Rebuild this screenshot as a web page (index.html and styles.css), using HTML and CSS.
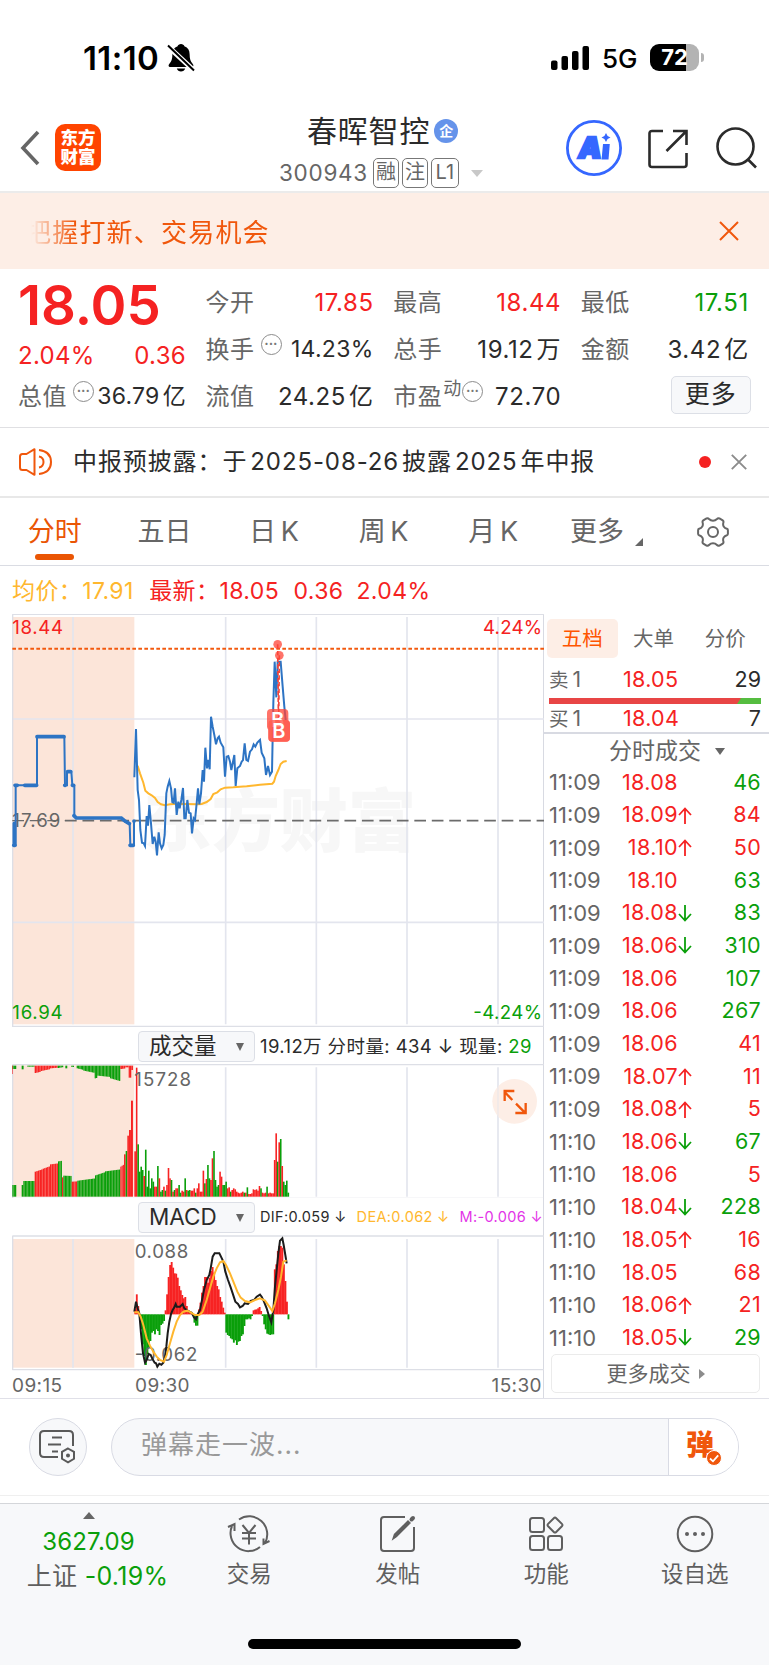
FILE: index.html
```
<!DOCTYPE html>
<html lang="zh-CN">
<head>
<meta charset="UTF-8">
<title>春晖智控 300943</title>
<link rel="stylesheet" href="styles.css">
</head>
<body>

<div class="status">
	<span class="clock">11:10</span>
	<svg class="bell" width="28" height="28" viewBox="0 0 28 28">
		<path d="M14 0c-1.700 0-3 1-3.400 2.200C7 3.500 5.400 6.400 5.400 10c0 5-1 7.500-3 9.700-1.500 1.700-.7 3.300 1 3.300h21.200c1.700 0 2.500-1.600 1-3.300-2-2.200-3-4.700-3-9.700 0-3.600-1.600-6.500-5.200-7.800C17 1 15.700 0 14 0zM9.800 24.500h8.400c-.6 1.900-2.200 3-4.200 3s-3.600-1.100-4.200-3z"/>
		<path d="M0 1.500l27 25" stroke="#fff" stroke-width="5"/>
		<path d="M1 1.500l26 25" stroke="#000" stroke-width="2"/>
	</svg>
	<svg class="signal" width="38" height="24" viewBox="0 0 38 24">
		<rect x="0" y="14.500" width="6.500" height="9.500" rx="2"/>
		<rect x="10.500" y="10" width="6.500" height="14" rx="2"/>
		<rect x="21" y="5" width="6.500" height="19" rx="2"/>
		<rect x="31.500" y="0" width="6.500" height="24" rx="2"/>
	</svg>
	<span class="net">5G</span>
	<div class="battery"><span>72</span></div>
	<i class="battery-tip"></i>
</div>

<div class="header">
	<svg class="back" width="20" height="36" viewBox="0 0 20 36"><path d="M18 2L3 18l15 16" fill="none" stroke="#666" stroke-width="3.600"/></svg>
	<div class="logo">东方<br>财富</div>
	<div class="name">
		<div class="name-top">春晖智控<span class="qi">企</span></div>
		<div class="name-code">300943<span class="tag first">融</span><span class="tag">注</span><span class="tag l1">L1</span><i class="caret"></i></div>
	</div>
	<svg class="ai" width="56" height="56" viewBox="0 0 56 56">
		<circle cx="28" cy="28" r="26.600" fill="none" stroke="#3567ff" stroke-width="2.800"/>
		<text x="0" y="38" class="ai-text" transform="translate(16.500 0) skewX(-8)">A</text>
		<path d="M37 24h6.800l-1.300 15.500h-6.900z" fill="#3567ff"/>
		<path d="M40 13l1.600 2.900 2.900 1.600-2.900 1.600L40 22l-1.600-2.900-2.900-1.600 2.900-1.600z" fill="#3567ff"/>
	</svg>
	<svg class="share" width="40" height="40" viewBox="0 0 40 40" fill="none" stroke="#2b2b2b" stroke-width="2.600">
		<path d="M15 2H4Q1.500 2 1.500 4.500v31Q1.500 38 4 38h32q2.500 0 2.500-2.500V24M25 2h13.500v14M38 2.500L18.500 22"/>
	</svg>
	<svg class="search" width="42" height="42" viewBox="0 0 42 42" fill="none" stroke="#2b2b2b" stroke-width="2.600">
		<circle cx="19.500" cy="19.500" r="18"/><path d="M31.500 32L40 40.500"/>
	</svg>
</div>

<div class="banner">
	<span>把握打新、交易机会</span>
	<svg width="20" height="20" viewBox="0 0 20 20"><path d="M1 1l18 18M19 1L1 19" stroke="#f0570c" stroke-width="2"/></svg>
</div>

<div class="stats">
	<div class="col">
		<div class="price">18.05</div>
		<div class="chg"><span>2.04%</span><span>0.36</span></div>
		<div class="item tight"><label>总值</label><i class="more-dot">•••</i><b>36.79<u>亿</u></b></div>
	</div>
	<div class="col">
		<div class="item"><label>今开</label><b class="red">17.85</b></div>
		<div class="item tight"><label>换手</label><i class="more-dot">•••</i><b>14.23%</b></div>
		<div class="item"><label>流值</label><b>24.25<u>亿</u></b></div>
	</div>
	<div class="col">
		<div class="item"><label>最高</label><b class="red">18.44</b></div>
		<div class="item"><label>总手</label><b>19.12<u>万</u></b></div>
		<div class="item"><label>市盈</label><sup>动</sup><i class="more-dot flush">•••</i><b>72.70</b></div>
	</div>
	<div class="col">
		<div class="item"><label>最低</label><b class="green">17.51</b></div>
		<div class="item"><label>金额</label><b>3.42<u>亿</u></b></div>
		<div class="item"><div class="btn-more">更多</div></div>
	</div>
</div>

<div class="notice">
	<svg width="34" height="28" viewBox="0 0 34 28" fill="none" stroke="#f0570c" stroke-width="2">
		<path d="M15.500 1.200v25.600L7.500 22H3.500Q1 22 1 19.500V8.500Q1 6 3.500 6h4z" stroke-linejoin="round"/>
		<path d="M20 8.500q4.500 1 4.500 5.500t-4.500 5.500M20 2q12 1.500 12 12T20 26"/>
	</svg>
	<span class="notice-text">中报预披露：<span>于<em>2025-08-26</em>披露<em>2025</em>年中报</span></span>
	<i class="dot"></i>
	<svg width="16" height="16" viewBox="0 0 16 16"><path d="M.8.800l14.400 14.400M15.200.800L.8 15.200" stroke="#8c8c8c" stroke-width="1.900"/></svg>
</div>

<div class="tabs">
	<span class="on">分时</span><span>五日</span><span>日 K</span><span>周 K</span><span>月 K</span>
	<span class="tab-more">更多<i></i></span>
	<svg width="32" height="30" viewBox="0 0 32 30" fill="none" stroke="#666" stroke-width="2">
		<path d="M9.500 1.500q1.500-.7 2.500.5 1.700 1.700 4 1.700t4-1.700q1-1.200 2.500-.5l3.200 1.900q1.100.8.700 2.100-.7 2.300.3 4 1.100 1.800 3.200 2.300 1 .3 1 1.500v3.400q0 1.200-1 1.500-2.100.5-3.200 2.300-1 1.700-.3 4 .4 1.300-.7 2.100l-3.200 1.900q-1.500.7-2.500-.5-1.700-1.700-4-1.700t-4 1.700q-1 1.200-2.500.5l-3.200-1.900q-1.100-.8-.7-2.100.7-2.300-.3-4-1.100-1.800-3.200-2.300-1-.3-1-1.500v-3.400q0-1.200 1-1.500 2.100-.5 3.200-2.300 1-1.700.3-4-.4-1.300.7-2.100z"/>
		<circle cx="16" cy="15" r="5"/>
	</svg>
</div>

<div class="legend">
	<span class="yellow">均价：</span><span class="yellow v1">17.91</span>
	<span class="red">最新：</span><span class="red v2">18.05</span><span class="red v3">0.36</span><span class="red">2.04%</span>
</div>

<div class="main">
	<div class="charts">
		<!-- price -->
		<svg class="pane" width="544" height="413" viewBox="0 162 1632 1239">
			<rect x="37" y="171" width="366" height="1222" fill="#fce5d9"/>
			<text class="mark" x="430" y="857" textLength="818">东方财富</text>
			<path class="grid" d="M219 171V1393M677 171V1393M949 171V1393M1221 171V1393M1494 171V1393M37 477H1632M37 1087H1632"/>
			<path class="frame" d="M37 163H1632M38 163V1401M37 1399H1632"/>
			<path d="M37 266H1632" stroke="#f2590e" stroke-width="6" stroke-dasharray="11 7"/>
			<path d="M195 782H1632" stroke="#6b6b6b" stroke-width="5" stroke-dasharray="35 17.400"/>
			<path d="M37 782H195" stroke="#6b6b6b" stroke-width="4" stroke-dasharray="35 17.400"/>
			<text class="lbl gray" x="37" y="801" textLength="144">17.69</text>
			<polyline class="yl" points="413,617 420,640 430,668 436,692 445,700 455,706 465,714 473,726 483,733 495,736 510,733 530,731 560,732 590,733 605,732 620,726 632,717 640,702 652,697 662,688 675,683 700,682 740,679 780,674 817,671 822,665 827,648 835,630 842,612 850,605 860,603"/>
			<polyline class="bl" points="43,856 47,856 47,676 111,676 111,530 193,530 195,676 201,676 201,635 214,635 217,676 223,678 223,767 230,774 365,774 375,785 389,791 391,856 402,856 402,782"/>
			<path class="bl thick" d="M41 856h4M45 676h7M74 676H110M111 530H192M194 676h2M203 635H212M217 676h4M222 767l7 7H364l12 10 12 7M390 856h10M402 783v1M43 790V856"/>
			<polyline class="bl" points="403,652 408,507 413,690 417,720 421,810 426,848 431,850 435,858 440,768 444,797 448,735 453,790 458,852 463,830 467,845 471,886 476,817 480,850 485,865 490,855 494,825 499,700 503,680 508,663 513,685 517,726 521,728 525,685 530,765 535,725 539,745 544,720 549,684 553,775 557,775 562,720 567,758 572,760 576,820 581,775 585,780 590,730 594,685 598,733 603,700 608,630 612,665 616,563 621,625 625,600 629,628 633,470 638,500 643,525 648,553 653,535 657,530 662,548 670,562 675,650 680,590 685,588 690,605 694,630 703,585 707,678 712,625 720,618 725,605 729,600 734,550 739,600 744,603 750,575 756,568 761,553 766,560 772,548 780,540 785,578 793,595 798,645 804,618 810,645 816,635 820,430 824,305 829,412 833,305 842,305 848,380 853,440 857,480"/>
			<path d="M833 253L835 450M838 286L836 480" stroke="#f4433a" stroke-width="5" stroke-dasharray="13 7"/>
			<g fill="#ff4538" opacity=".75">
				<circle cx="833" cy="253" r="13"/><circle cx="838" cy="286" r="13"/>
				<rect x="801" y="447" width="64" height="64" rx="12"/><rect x="805" y="480" width="65" height="65" rx="12"/>
			</g>
			<text class="b" x="813" y="501">B</text>
			<rect x="805" y="480" width="65" height="65" rx="12" fill="#ff5a4d" opacity=".8"/>
			<text class="b" x="817" y="534">B</text>
			<text class="lbl red" x="37" y="221" textLength="152">18.44</text>
			<text class="lbl red" x="1449" y="221" textLength="177">4.24%</text>
			<text class="lbl green" x="37" y="1378" textLength="151">16.94</text>
			<text class="lbl green" x="1420" y="1378" textLength="206">-4.24%</text>
		</svg>

		<div class="bar">
			<div class="select">成交量<i></i></div>
			<div class="bar-text">19.12<u>万</u> <u>分时量</u>: 434 ↓ <u>现量</u>: <span class="green">29</span></div>
		</div>

		<!-- volume -->
		<svg class="pane" width="544" height="134" viewBox="0 222 1632 402">
			<rect x="37" y="226" width="366" height="394" fill="#fce5d9"/>
			<path class="grid" d="M219 232V620M677 232V620M949 232V620M1221 232V620M1494 232V620"/>
			<path class="frame" d="M37 224H1632M38 224V624M37 625H1632"/>
			<g id="vol"></g>
			<text class="lbl gray" x="403" y="289" textLength="170">15728</text>
			<circle cx="1544" cy="334" r="67" fill="#fdeee6"/>
			<path class="grid" d="M1494 289V379" opacity=".5"/>
			<path d="M1537 330L1514 306M1514 333V303h29M1548 341l26 26M1577 339v30h-31" fill="none" stroke="#f0570c" stroke-width="7"/>
		</svg>

		<div class="bar macd-bar">
			<div class="select">MACD<i></i></div>
			<div class="bar-text small"><span>DIF:0.059 ↓</span><span class="yellow">DEA:0.062 ↓</span><span class="purple">M:-0.006 ↓</span></div>
		</div>

		<!-- macd -->
		<svg class="pane" width="544" height="136" viewBox="0 105 1632 408">
			<rect x="37" y="117" width="366" height="386" fill="#fce5d9"/>
			<path class="grid" d="M219 117V503M677 117V503M949 117V503M1221 117V503M1494 117V503"/>
			<path class="frame" d="M37 108H1632M38 108V510M37 509H1632"/>
			<g id="macd"></g>
			<text class="lbl gray" x="404" y="173" textLength="161">0.088</text>
			<text class="lbl gray" x="404" y="484" textLength="188">-0.062</text>
			<polyline class="dif" points="403,335 408,305 413,325 418,340 423,400 429,460 435,488 440,480 446,462 452,465 458,478 464,488 468,490 472,500 478,491 484,494 490,488 495,470 499,440 503,400 508,365 513,342 518,330 523,322 527,312 530,320 540,320 548,312 553,325 560,330 568,335 575,338 582,352 588,358 592,345 600,330 606,300 612,270 620,240 628,225 632,205 638,170 644,160 658,160 664,172 670,185 676,215 684,240 692,262 698,280 706,305 714,312 720,322 728,318 734,310 744,312 752,303 762,300 770,290 780,284 785,290 792,305 800,325 806,345 814,367 820,330 825,260 830,210 835,160 840,122 847,115 851,135 856,165 860,190"/>
			<polyline class="yl" points="403,337 415,337 422,350 430,375 440,415 450,437 460,455 470,470 480,480 492,485 500,465 510,430 520,395 530,365 540,345 550,335 562,332 572,337 585,345 598,345 608,335 620,300 630,265 640,230 650,205 660,187 670,183 678,195 690,220 700,245 712,275 722,293 735,303 750,307 765,300 780,295 795,302 808,320 817,333 825,310 835,270 843,230 850,185 860,181"/>
		</svg>

		<div class="times"><span>09:15</span><span>09:30</span><span>15:30</span></div>
	</div>

	<div class="side">
		<div class="side-tabs"><span class="on">五档</span><span>大单</span><span>分价</span></div>
		<div class="quote"><span>卖<em>1</em></span><b>18.05</b><span class="n">29</span></div>
		<div class="ratio"><i></i></div>
		<div class="quote buy"><span>买<em>1</em></span><b>18.04</b><span class="n">7</span></div>
		<div class="side-title">分时成交<i></i></div>
		<div id="ticks"></div>
		<div class="side-more">更多成交<i></i></div>
	</div>
</div>

<div class="danmu">
	<div class="danmu-set">
		<svg width="38" height="34" viewBox="0 0 38 34" fill="none" stroke="#5a5a5a" stroke-width="2">
			<path d="M34 16V5q0-4-4-4H5Q1 1 1 5v18q0 4 4 4h14M13 7.500h10M9 14.500h13M13 21.500h6"/>
			<path d="M29 18.500l6 3.400v6.900l-6 3.500-6-3.500v-6.900z"/><circle cx="29" cy="25.400" r="1" fill="#5a5a5a"/>
		</svg>
	</div>
	<div class="danmu-box">
		<span>弹幕走一波...</span>
		<div class="danmu-btn">弹
			<svg width="16" height="16" viewBox="0 0 16 16"><circle cx="8" cy="8" r="7.500" fill="#f0570c" stroke="#fff"/><path d="M4 8.500l3 2.800 5.200-6" fill="none" stroke="#fff" stroke-width="1.800"/></svg>
		</div>
	</div>
</div>

<div class="nav">
	<div class="index">
		<i></i>
		<div class="green">3627.09</div>
		<div><u>上证</u> <span class="green">-0.19%</span></div>
	</div>
	<div class="nav-item">
		<svg width="44" height="40" viewBox="0 0 44 40" fill="none" stroke="#5f5f5f" stroke-width="2">
			<path d="M12 5.500A18 18 0 0 1 38 29M36.500 24.500V30l6-3M33 33A18 18 0 0 1 5 12M7.500 17V10L1 13"/>
			<path d="M15.500 11l6.500 8 6.500-8M22 19v11.500M15 19h14M15 24.500h14"/>
		</svg>
		交易
	</div>
	<div class="nav-item">
		<svg width="38" height="40" viewBox="0 0 38 40" fill="none" stroke="#5f5f5f" stroke-width="2">
			<path d="M26 3H5Q2 3 2 6v28q0 3 3 3h27q3 0 3-3V13"/>
			<path d="M14 25l1.500-4.500L29 7l2 2-13.500 13.500z" fill="#5f5f5f" stroke-width="1.400"/><path d="M32.500 5.500l1.500-1.500" stroke-width="4" stroke-linecap="round"/>
		</svg>
		发帖
	</div>
	<div class="nav-item">
		<svg width="36" height="40" viewBox="0 0 36 40" fill="none" stroke="#5f5f5f" stroke-width="2">
			<rect x="2" y="4" width="14" height="14" rx="2.500"/><rect x="2" y="22" width="14" height="14" rx="2.500"/><rect x="20" y="22" width="14" height="14" rx="2.500"/>
			<path d="M25.800 4.200q1.200-1.200 2.400 0l5.700 5.700q1.200 1.200 0 2.400l-5.700 5.700q-1.200 1.200-2.400 0l-5.700-5.700q-1.200-1.200 0-2.400z"/>
		</svg>
		功能
	</div>
	<div class="nav-item">
		<svg width="38" height="40" viewBox="0 0 38 40">
			<circle cx="19" cy="20" r="17.300" fill="none" stroke="#5f5f5f" stroke-width="2"/>
			<g fill="#5f5f5f"><circle cx="11" cy="20" r="2"/><circle cx="19" cy="20" r="2"/><circle cx="27" cy="20" r="2"/></g>
		</svg>
		设自选
	</div>
</div>
<div class="home"></div>

<script src="chart.js"></script>
</body>
</html>
```
FILE: styles.css
```
* {
	box-sizing: border-box;
}

body {
	margin: 0;
	width: 769px;
	height: 1665px;
	overflow: hidden;
	background: #fff;
	color: #2b2b2b;
	font-family: Inter, "Noto Sans CJK SC", sans-serif;
	font-size: 24px;
	line-height: 1;
	white-space: nowrap;
}

i, em { font-style: normal; }
b { font-weight: normal; }
u { text-decoration: none; }
svg { flex: none; display: block; }

.red { color: #f52222; fill: #f52222; }
.green { color: #0a9f0a; fill: #0a9f0a; }
.yellow { color: #ffb72e; }
.purple { color: #e335e8; }
.gray { fill: #666; }

/* status bar */
.status {
	display: flex;
	align-items: center;
	height: 107px;
	padding: 8px 0 0 83px;
	color: #000;
}
.clock {
	width: 84px;
	padding-top: 1px;
	font-size: 33px;
	font-weight: 600;
	letter-spacing: .4px;
}
.signal { margin-left: 356px; }
.net {
	width: 48px;
	margin-left: 13px;
	padding-top: 2px;
	font-size: 26px;
	font-weight: 500;
}
.battery {
	width: 49px;
	height: 27px;
	border-radius: 9px;
	background: linear-gradient(90deg, #000 36px, #b3b3b3 36px);
	color: #fff;
	font-size: 22px;
	font-weight: 700;
	line-height: 27px;
	text-align: center;
}
.battery-tip {
	width: 3px;
	height: 9px;
	margin-left: 2px;
	border-radius: 0 3px 3px 0;
	background: #b3b3b3;
}

/* header */
.header {
	display: flex;
	align-items: center;
	height: 86px;
	padding-left: 20px;
	border-bottom: 2px solid #ebebeb;
}
.back { margin-top: -3px; }
.logo {
	width: 46px;
	height: 47px;
	margin: -3px 0 0 15px;
	padding-top: 4px;
	border-radius: 10px;
	background: #ff4400;
	color: #fff;
	font-size: 17.500px;
	font-weight: 900;
	line-height: 19px;
	text-align: center;
}
.name {
	width: 208px;
	margin-left: 178px;
}
.name-top {
	display: flex;
	align-items: center;
	height: 44px;
	padding-left: 28px;
	font-size: 30px;
	letter-spacing: .8px;
}
.qi {
	width: 24px;
	height: 24px;
	margin-left: 4px;
	border-radius: 50%;
	background: #6593ea;
	color: #fff;
	font-size: 14px;
	font-weight: 700;
	letter-spacing: 0;
	line-height: 23px;
	text-align: center;
}
.name-code {
	display: flex;
	align-items: center;
	height: 36px;
	padding-top: 4px;
	color: #666;
	font-size: 22.500px;
	letter-spacing: .7px;
}
.tag {
	width: 26px;
	height: 30px;
	margin-left: 3px;
	border: 1px solid #777;
	border-radius: 5px;
	font-size: 20px;
	letter-spacing: 0;
	line-height: 27px;
	text-align: center;
}
.tag.first { margin-left: 5px; }
.l1 { width: 28px; }
.caret {
	margin-left: 12px;
	border: 6.500px solid transparent;
	border-top: 7px solid #c8c8c8;
	border-bottom: 0;
}
.ai { margin: -2px 0 0 79px; }
.ai-text {
	fill: #3567ff;
	stroke: #3567ff;
	stroke-width: 2.500px;
	font-size: 29px;
	font-weight: 900;
}
.share { margin: -1px 0 0 26px; }
.search { margin: -2px 0 0 28px; }

/* banner */
.banner {
	display: flex;
	align-items: center;
	justify-content: space-between;
	height: 76px;
	padding: 0 30px 0 25px;
	background: #fdeee6;
	color: #f0570c;
	font-size: 26px;
	letter-spacing: 1.200px;
}
.banner span {
	margin-top: 3px;
	-webkit-mask-image: linear-gradient(90deg, transparent 6px, #000 50px);
	mask-image: linear-gradient(90deg, transparent 6px, #000 50px);
}

/* quote numbers */
.stats {
	display: grid;
	grid-template-columns: repeat(4, 168px);
	column-gap: 19.600px;
	height: 159px;
	padding: 10px 19px 0 18px;
	border-bottom: 1px solid #e0e0e3;
}
.item {
	display: flex;
	align-items: center;
	height: 47px;
}
.item label {
	color: #666;
	letter-spacing: .5px;
}
.item b {
	margin-left: auto;
	letter-spacing: .6px;
}
.item u { margin-left: 3px; }
.item.tight b { font-size: 23px; letter-spacing: .3px; }
.item sup {
	margin: -16px 0 0 1px;
	color: #666;
	font-size: 18px;
}
.more-dot {
	width: 21px;
	height: 21px;
	margin: -10px 0 0 6px;
	border: 1.500px solid #8c8c8c;
	border-radius: 50%;
	color: #777;
	font-size: 7px;
	letter-spacing: .4px;
	line-height: 18px;
	text-align: center;
}
.more-dot.flush { margin-left: 1px; }
.price {
	height: 50px;
	color: #f52222;
	font-size: 54.500px;
	font-weight: 600;
	line-height: 52px;
}
.chg {
	display: flex;
	justify-content: space-between;
	align-items: center;
	height: 44px;
	padding-top: 9px;
	color: #f52222;
	letter-spacing: .3px;
}
.btn-more {
	width: 80px;
	height: 38px;
	margin: -4px -2px 0 auto;
	border: 1.500px solid #dcdfe6;
	border-radius: 5px;
	background: #f7f8fa;
	font-size: 25px;
	letter-spacing: 1px;
	line-height: 34px;
	text-align: center;
}

.notice {
	display: flex;
	align-items: center;
	height: 70px;
	padding: 0 22px 0 19px;
	border-bottom: 2px solid #e8e8e8;
	letter-spacing: .9px;
}
.notice-text { margin-left: 20px; }
.notice-text em { margin: 0 3px; }
.dot {
	width: 12px;
	height: 12px;
	margin: 0 20px 0 auto;
	border-radius: 50%;
	background: #f52222;
}

.tabs {
	display: flex;
	align-items: center;
	height: 68px;
	padding: 0 40px 0 0;
	border-bottom: 1px solid #dadce3;
	color: #666;
	font-size: 27px;
	word-spacing: -3px;
}
.tabs span {
	position: relative;
	width: 109.600px;
	text-align: center;
}
.tabs .on { color: #ea5504; }
.tabs .on::after {
	content: "";
	position: absolute;
	left: 35px;
	top: 36px;
	width: 39px;
	height: 6px;
	border-radius: 3px;
	background: #ea5504;
}
.tabs .tab-more { width: 98px; }
.tab-more i {
	position: absolute;
	right: 3px;
	bottom: -1px;
	border-left: 8px solid transparent;
	border-bottom: 8px solid #666;
}
.tabs svg { margin-left: auto; }

.legend {
	display: flex;
	align-items: center;
	height: 50px;
	margin-bottom: -2px;
	padding-left: 12px;
	font-size: 23px;
	letter-spacing: .4px;
}
.v1 { width: 67px; }
.v2 { width: 74px; }
.v3 { width: 63px; }

/* charts */
.main {
	display: flex;
	height: 785px;
	border-bottom: 1px solid #e0e0e8;
}
.charts {
	width: 544px;
	border-right: 1px solid #d8dae2;
}
.grid { stroke: #e3e5ee; stroke-width: 5; fill: none; }
.frame { stroke: #dddfe6; stroke-width: 4; fill: none; }
.mark { font-size: 205px; font-weight: 900; fill: #f7f7f7; }
.lbl { font-size: 56px; }
.yl { fill: none; stroke: #ffb72e; stroke-width: 6; }
.bl { fill: none; stroke: #2d74c4; stroke-width: 6; }
.dif { fill: none; stroke: #1c1c1c; stroke-width: 6; }
.thick { stroke-width: 11; stroke-linecap: round; }
.b { font-size: 60px; font-weight: 600; fill: #fff; }

.bar {
	display: flex;
	align-items: center;
	height: 37px;
	padding: 2px 0 0 138px;
}
.select {
	display: flex;
	align-items: center;
	justify-content: space-between;
	width: 117px;
	height: 31px;
	padding: 0 10px;
	border: 1.500px solid #dcdfe6;
	border-radius: 4px;
	background: #f7f8fa;
	font-size: 22.500px;
}
.select i {
	border: 4.500px solid transparent;
	border-top: 8px solid #666;
	border-bottom: 0;
}
.bar-text {
	margin-left: 5px;
	font-size: 18.500px;
	letter-spacing: .4px;
}
.bar-text.small {
	display: flex;
	justify-content: space-between;
	width: 283px;
	font-size: 14.500px;
	letter-spacing: .35px;
}
.times {
	display: grid;
	grid-template-columns: 123px 1fr auto;
	padding: 5px 1px 0 12px;
	color: #666;
	font-size: 19px;
	letter-spacing: .4px;
}

/* right column */
.side {
	width: 225px;
	padding: 5px 8px 0 5px;
	font-size: 21.500px;
}
.side-tabs {
	display: flex;
	height: 39px;
	margin-left: -2px;
	color: #666;
	line-height: 39px;
	text-align: center;
}
.side-tabs span { width: 73px; font-size: 20.500px; }
.side-tabs .on {
	width: 72px;
	border-radius: 5px;
	background: #fdeee6;
	color: #ff5500;
}
.quote {
	display: grid;
	grid-template-columns: 74px 60px 1fr;
	align-items: center;
	height: 40px;
	padding-top: 3px;
}
.quote span:first-child { color: #666; font-size: 19.500px; }
.quote em { margin-left: 4px; font-size: 21px; }
.quote b { color: #f52222; letter-spacing: .3px; }
.quote .n { text-align: right; }
.quote.buy {
	height: 30px;
	margin: 0 -8px 0 -5px;
	padding: 2px 8px 0 5px;
	border-bottom: 2px solid #d8dae2;
}
.ratio {
	height: 6px;
	background: #55bd40;
}
.ratio i {
	display: block;
	width: 192px;
	height: 6px;
	background: #e84545;
	clip-path: polygon(0 0, 100% 0, 188px 100%, 0 100%);
}
.side-title {
	display: flex;
	align-items: center;
	height: 32px;
	padding: 2px 0 0 60px;
	color: #666;
	font-size: 23px;
}
.side-title i {
	margin-left: 14px;
	border: 5.500px solid transparent;
	border-top: 7px solid #666;
	border-bottom: 0;
}
.tick {
	display: grid;
	grid-template-columns: 58px 71px 15px 1fr;
	align-items: center;
	height: 32.680px;
}
.tick span:first-child { color: #666; font-size: 22px; }
.tick span:nth-child(2) { text-align: right; letter-spacing: .4px; }
.tick span:last-child { text-align: right; letter-spacing: .3px; }
.side-more {
	display: flex;
	align-items: center;
	justify-content: center;
	height: 39px;
	margin: 0 1px 0 2px;
	border: 1.500px solid #ebebeb;
	border-radius: 5px;
	color: #666;
	font-size: 21px;
}
.side-more i {
	margin-left: 8px;
	border: 5px solid transparent;
	border-left: 6px solid #8c8c8c;
	border-right: 0;
}

/* bullet comments */
.danmu {
	display: flex;
	align-items: center;
	height: 97px;
	padding: 0 30px 0 29px;
	border-bottom: 1px solid #efefef;
}
.danmu-set {
	display: flex;
	align-items: center;
	justify-content: center;
	width: 58px;
	height: 58px;
	border: 1px solid #d9dbe4;
	border-radius: 50%;
	background: #f7f8fa;
}
.danmu-box {
	display: flex;
	width: 628px;
	height: 58px;
	margin-left: 24px;
	border: 1px solid #d9dbe4;
	border-radius: 29px;
	background: #f7f8fa;
	color: #999;
	font-size: 26px;
	line-height: 52px;
	letter-spacing: 1px;
	overflow: hidden;
}
.danmu-box span {
	flex: 1;
	padding-left: 29px;
}
.danmu-btn {
	position: relative;
	width: 70px;
	padding-left: 17px;
	border-left: 1px solid #d9dbe4;
	background: #fff;
	color: #f0570c;
	font-size: 28px;
	font-weight: 900;
}
.danmu-btn svg {
	position: absolute;
	left: 37px;
	top: 31px;
}

/* bottom nav */
.nav {
	display: flex;
	height: 162px;
	margin-top: 7px;
	padding-left: 2px;
	border-top: 1px solid #d4d6da;
	background: #f7f8fa;
	color: #5f5f5f;
}
.index {
	display: flex;
	flex-direction: column;
	align-items: center;
	width: 173px;
	padding-top: 8px;
	line-height: 34px;
	letter-spacing: .2px;
}
.index i {
	margin-bottom: 6px;
	border: 6.500px solid transparent;
	border-top: 0;
	border-bottom: 7px solid #666;
}
.index div:last-child {
	padding-left: 18px;
	font-size: 25px;
	letter-spacing: .3px;
}
.nav-item {
	display: flex;
	flex-direction: column;
	align-items: center;
	width: 148.500px;
	padding-top: 10px;
	font-size: 22.500px;
	gap: 9px;
}
.home {
	position: absolute;
	left: 248px;
	top: 1639px;
	width: 273px;
	height: 10px;
	border-radius: 5px;
	background: #000;
}
```
FILE: chart.js
```
var RED = "#f72323", GREEN = "#0a9f0a";

function bar(id, x, w, y, h, color) {
	var r = document.createElementNS("http://www.w3.org/2000/svg", "rect");
	r.setAttribute("x", x);
	r.setAttribute("y", y);
	r.setAttribute("width", w);
	r.setAttribute("height", h);
	r.setAttribute("fill", color);
	document.getElementById(id).appendChild(r);
}

// call auction: from, to, height at start, height at end, color
var auction = [
	[37,49,35,35,"g"], [65,70,35,36,"g"], [70,104,47,47,"g"], [104,128,75,83,"r"], [128,150,84,92,"r"],
	[150,174,97,100,"r"], [174,186,106,108,"g"], [186,190,58,58,"r"], [190,215,63,62,"g"], [215,232,45,46,"r"],
	[232,285,48,55,"g"], [285,315,64,74,"g"], [315,361,76,82,"g"], [361,372,90,98,"r"], [372,377,127,127,"r"],
	[377,382,137,137,"g"], [382,387,183,183,"r"], [387,393,200,200,"r"], [393,399,288,288,"r"]
];
var unmatched = [
	[37,49,10,10,"g"], [37,39,25,25,"r"], [65,71,11,11,"g"], [82,104,3,3,"g"], [104,122,22,18,"r"], [122,150,16,10,"r"],
	[150,173,8,6,"r"], [173,190,7,4,"g"], [196,202,8,8,"g"], [214,222,4,4,"g"], [230,250,8,13,"g"], [250,284,15,22,"g"],
	[284,292,38,36,"g"], [292,330,30,34,"g"], [330,361,38,47,"g"], [361,376,10,8,"r"], [376,386,5,5,"r"], [386,394,36,36,"r"], [394,399,13,13,"r"]
];
function auctionBars(list, fromTop) {
	list.forEach(function (a) {
		var n = Math.max(1, Math.round((a[1] - a[0]) / 4.4)), w = (a[1] - a[0]) / n;
		for (var i = 0; i < n; i++) {
			var h = a[2] + (a[3] - a[2]) * i / n;
			bar("vol", a[0] + i * w, w - .2, fromTop ? 227 : 620 - h, h, a[4] == "r" ? RED : GREEN);
		}
	});
}
auctionBars(auction, false);
auctionBars(unmatched, true);

var vol = ("r136 r387 g157 g75 g90 g80 r62 g141 g30 g78 g25 g55 g45 r30 r30 g92 r55 g15 g20 r30 g18 r35 r86 r55 g50 r15 g20 r25 r25 " +
	"g35 g12 r18 r15 g55 r20 g18 g20 r18 r18 r25 g12 r25 r40 r15 r15 r78 g40 r53 g95 g55 r50 r115 g137 g50 g30 g35 r75 r60 " +
	"g35 g35 g45 r25 r28 g15 r20 r25 r22 r15 r12 r10 r12 r15 g12 r12 g28 r8 r8 r10 r22 r20 r22 r18 r32 g25 r12 r10 r12 g30 r10 r12 r10 r10 " +
	"r110 r190 g105 r163 g173 r92 g45 g35 g48 g12").split(" ");
vol.forEach(function (v, i) {
	var h = +v.slice(1);
	bar("vol", 403 + i * 4.55, 4.8, 620 - h, h, v[0] == "r" ? RED : GREEN);
});

var macd = [15,60,25,-10,-45,-90,-125,-152,-120,-100,-80,-55,-50,-60,-45,-50,-62,-32,-28,-20,12,60,112,148,157,140,123,122,110,85,72,58,
	48,52,25,12,8,5,-5,-25,-34,-34,15,35,65,85,112,112,95,110,130,142,125,103,85,75,52,38,20,5,-55,-62,-65,-72,-75,-85,-78,-92,-82,-80,
	-65,-60,-35,-15,-15,-12,-15,-5,12,14,15,18,22,10,-5,-30,-45,-58,-60,-62,-60,-60,135,150,190,205,205,200,150,100,38,-15];
macd.forEach(function (v, i) {
	bar("macd", 403 + i * 4.55, 5.6, v > 0 ? 343 - v : 343, Math.abs(v), v > 0 ? RED : GREEN);
});

// time, price, direction, volume, side
var ticks = [
	["11:09","18.08","",46,"g"], ["11:09","18.09","u",84,"r"], ["11:09","18.10","u",50,"r"], ["11:09","18.10","",63,"g"],
	["11:09","18.08","d",83,"g"], ["11:09","18.06","d",310,"g"], ["11:09","18.06","",107,"g"], ["11:09","18.06","",267,"g"],
	["11:09","18.06","",41,"r"], ["11:09","18.07","u",11,"r"], ["11:09","18.08","u",5,"r"], ["11:10","18.06","d",67,"g"],
	["11:10","18.06","",5,"r"], ["11:10","18.04","d",228,"g"], ["11:10","18.05","u",16,"r"], ["11:10","18.05","",68,"r"],
	["11:10","18.06","u",21,"r"], ["11:10","18.05","d",29,"g"]
];
var arrows = {
	"": "",
	u: '<svg width="14" height="17" viewBox="0 0 14 17"><path d="M7 17V1.500M1 8l6-6.500L13 8" fill="none" stroke="#f52222" stroke-width="1.800"/></svg>',
	d: '<svg width="14" height="17" viewBox="0 0 14 17"><path d="M7 0v15.500M1 9l6 6.500L13 9" fill="none" stroke="#0a9f0a" stroke-width="1.800"/></svg>'
};
document.getElementById("ticks").innerHTML = ticks.map(function (t) {
	return '<div class="tick"><span>' + t[0] + '</span><span class="red">' + t[1] + '</span><i>' + arrows[t[2]] +
		'</i><span class="' + (t[4] == "r" ? "red" : "green") + '">' + t[3] + '</span></div>';
}).join("");
```
